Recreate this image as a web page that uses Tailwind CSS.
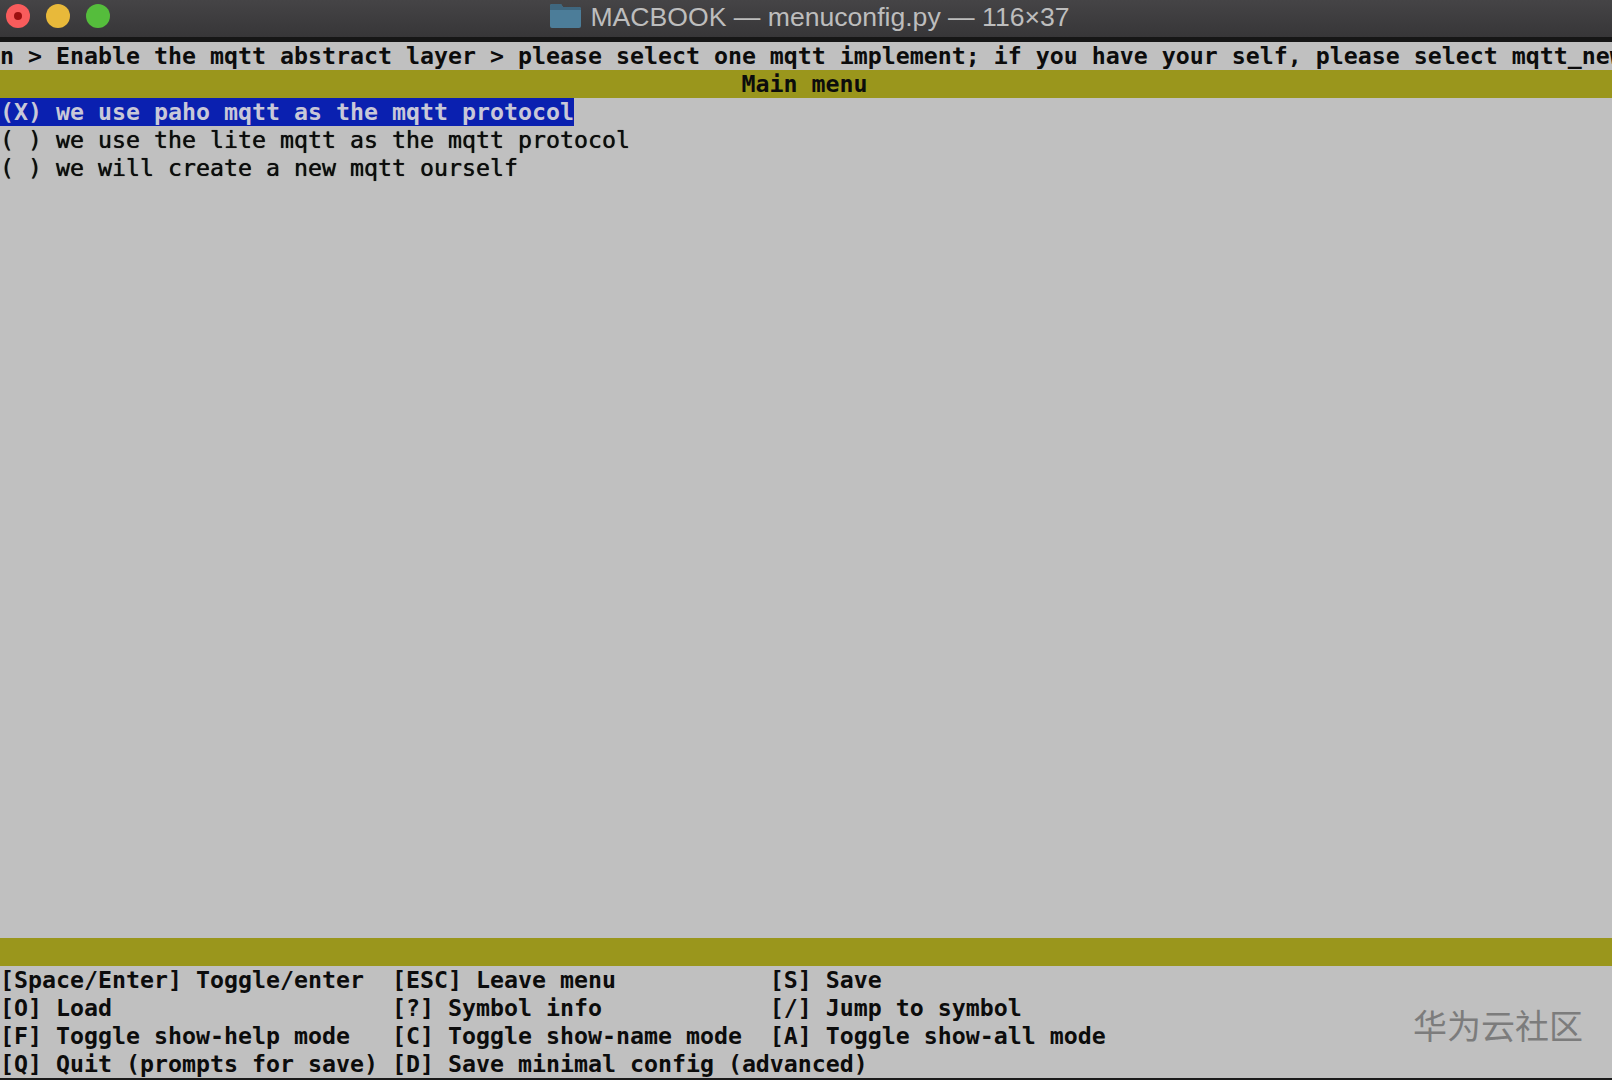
<!DOCTYPE html>
<html lang="en">
<head>
    <meta charset="UTF-8">
    <title>MACBOOK — menuconfig.py — 116×37</title>
    <script src="https://cdn.jsdelivr.net/npm/@tailwindcss/browser@4"></script>
</head>
<body class="bg-[#c0c0c0]">
    <div class="relative flex flex-col w-[1612px] h-[1080px] overflow-hidden bg-[#c0c0c0] text-[#0c0c0c] font-['DejaVu_Sans_Mono',monospace] text-[23.25px] leading-[28px]">
        <!-- Title bar -->
        <div class="relative flex items-center justify-center shrink-0 h-[42px] pb-[5px] pl-[8px] border-b-[5px] border-[#161616] bg-linear-to-b from-[#454446] to-[#373638]">
            <div class="absolute left-[6px] top-[4px] flex gap-[16px]">
                <span class="flex items-center justify-center w-[24px] h-[24px] rounded-full bg-[#f85c5c]"><span class="w-[8px] h-[8px] rounded-full bg-[#9c1010]"></span></span>
                <span class="w-[24px] h-[24px] rounded-full bg-[#e8b93a]"></span>
                <span class="w-[24px] h-[24px] rounded-full bg-[#55bd3c]"></span>
            </div>
            <div class="flex items-center gap-[9px] font-['Liberation_Sans',sans-serif] text-[26.6px] text-[#bdbdbd] leading-[32px]">
                <svg width="31" height="24" viewBox="0 0 31 24"><path d="M0 2 Q0 0 2 0 H11 L13 3 H29 Q31 3 31 5 V22 Q31 24 29 24 H2 Q0 24 0 22 Z" fill="#4c7d99"/><path d="M0 2 Q0 0 2 0 H11 L13 3 H29 Q31 3 31 5 V6 H0 Z" fill="#3f677f"/></svg>
                <span class="pt-[1px]">MACBOOK — menuconfig.py — 116×37</span>
            </div>
        </div>

        <!-- Breadcrumb -->
        <div class="h-[28px] shrink-0 font-bold whitespace-pre overflow-hidden">n &gt; Enable the mqtt abstract layer &gt; please select one mqtt implement; if you have your self, please select mqtt_new</div>
        <div class="h-[28px] shrink-0 pr-[3px] bg-[#9a961c] font-bold text-center whitespace-pre">Main menu</div>

        <!-- Options -->
        <div class="flex-1 [text-shadow:0_0_0.7px_#0c0c0c]">
            <div class="h-[28px] whitespace-pre"><span class="inline-block h-[28px] bg-[#0a20b0] font-bold text-[#c8c8d8] [text-shadow:none]">(X) we use paho mqtt as the mqtt protocol</span></div>
            <div class="h-[28px] whitespace-pre">( ) we use the lite mqtt as the mqtt protocol</div>
            <div class="h-[28px] whitespace-pre">( ) we will create a new mqtt ourself</div>
        </div>

        <!-- Footer -->
        <div class="h-[28px] shrink-0 bg-[#9a961c]"></div>
        <div class="shrink-0 font-bold">
            <div class="h-[28px] whitespace-pre">[Space/Enter] Toggle/enter  [ESC] Leave menu           [S] Save</div>
            <div class="h-[28px] whitespace-pre">[O] Load                    [?] Symbol info            [/] Jump to symbol</div>
            <div class="h-[28px] whitespace-pre">[F] Toggle show-help mode   [C] Toggle show-name mode  [A] Toggle show-all mode</div>
            <div class="h-[28px] whitespace-pre">[Q] Quit (prompts for save) [D] Save minimal config (advanced)</div>
        </div>
        <div class="h-[2px] shrink-0 bg-[#1a1a1a]"></div>

        <!-- Watermark -->
        <div class="absolute left-[1413px] top-[1003px] font-['Noto_Sans_CJK_SC',sans-serif] font-normal text-[34px] leading-[44px] text-[#7c7c7c]">华为云社区</div>
    </div>
</body>
</html>
